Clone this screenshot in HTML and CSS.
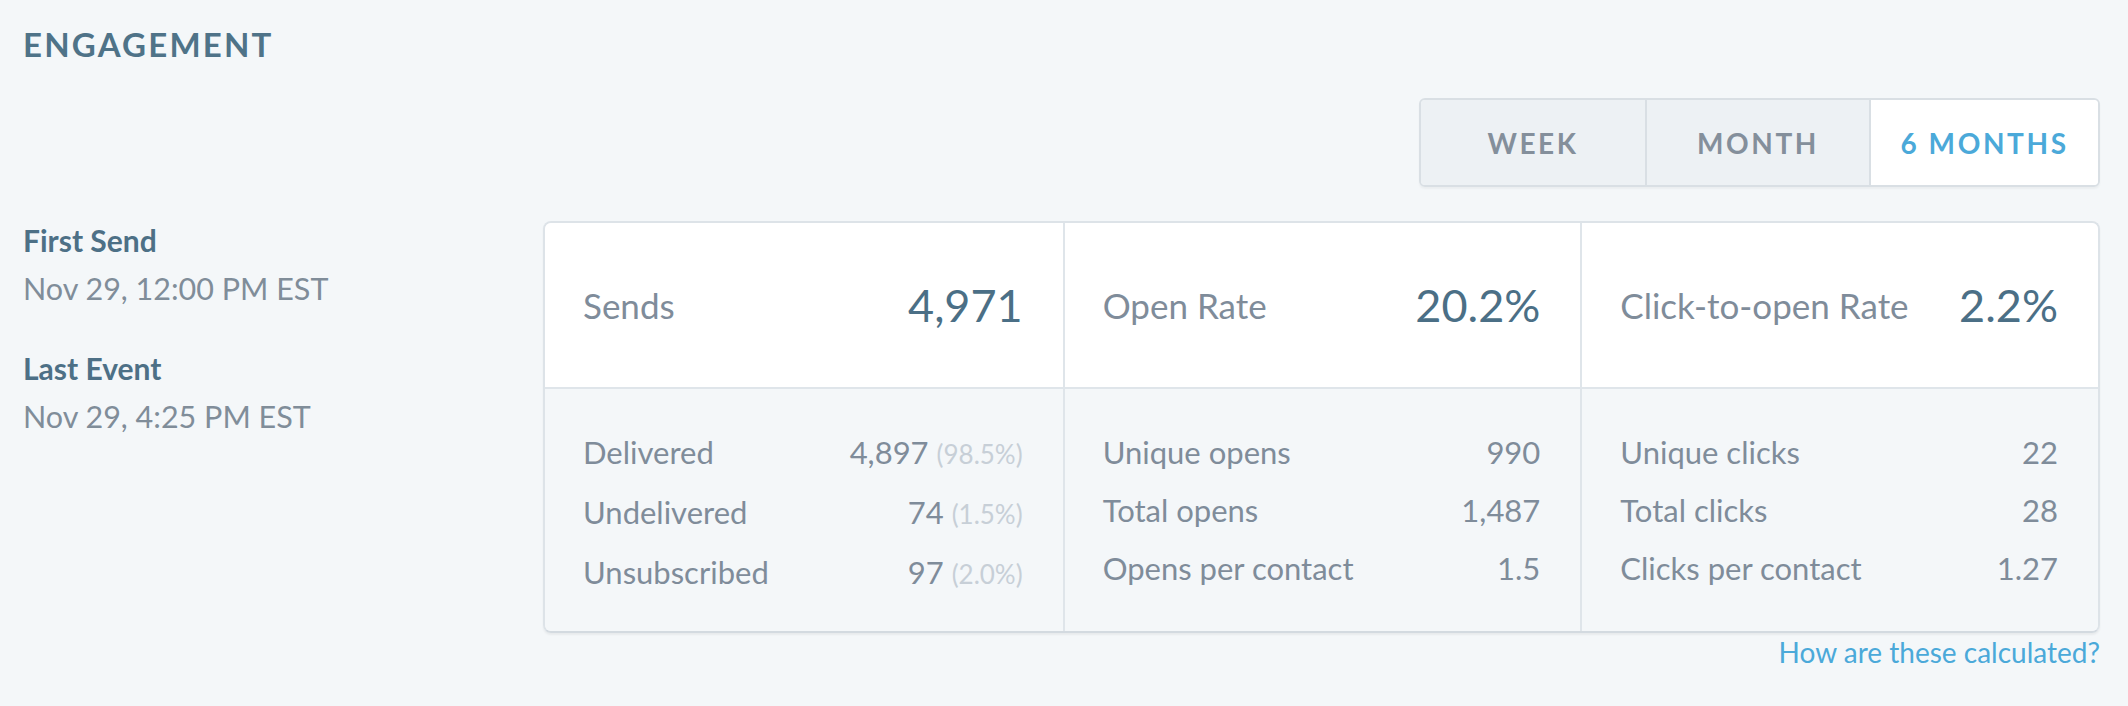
FILE: index.html
```html
<!DOCTYPE html>
<html lang="en">
<head>
<meta charset="utf-8">
<title>Engagement</title>
<link rel="stylesheet" href="styles.css">
</head>
<body>
<div class="page">
  <h1 class="title">ENGAGEMENT</h1>
  <div class="range-row">
    <div class="range">
      <button class="seg">WEEK</button>
      <button class="seg">MONTH</button>
      <button class="seg active">6 MONTHS</button>
    </div>
  </div>
  <div class="body">
    <aside class="meta">
      <div class="meta-item">
        <div class="meta-label">First Send</div>
        <div class="meta-value">Nov 29, 12:00 PM EST</div>
      </div>
      <div class="meta-item">
        <div class="meta-label">Last Event</div>
        <div class="meta-value">Nov 29, 4:25 PM EST</div>
      </div>
    </aside>
    <section class="stats">
      <div class="card">
        <div class="top">
          <div class="head"><span class="head-label">Sends</span><span class="head-num">4,971</span></div>
          <div class="head"><span class="head-label">Open Rate</span><span class="head-num">20.2%</span></div>
          <div class="head"><span class="head-label">Click-to-open Rate</span><span class="head-num">2.2%</span></div>
        </div>
        <div class="bottom">
          <div class="col">
            <div class="row"><span>Delivered</span><span>4,897 <span class="pct">(98.5%)</span></span></div>
            <div class="row"><span>Undelivered</span><span>74 <span class="pct">(1.5%)</span></span></div>
            <div class="row"><span>Unsubscribed</span><span>97 <span class="pct">(2.0%)</span></span></div>
          </div>
          <div class="col">
            <div class="row"><span>Unique opens</span><span>990</span></div>
            <div class="row"><span>Total opens</span><span>1,487</span></div>
            <div class="row"><span>Opens per contact</span><span>1.5</span></div>
          </div>
          <div class="col">
            <div class="row"><span>Unique clicks</span><span>22</span></div>
            <div class="row"><span>Total clicks</span><span>28</span></div>
            <div class="row"><span>Clicks per contact</span><span>1.27</span></div>
          </div>
        </div>
      </div>
      <div class="help-row"><a class="help" href="#">How are these calculated?</a></div>
    </section>
  </div>
</div>
</body>
</html>
```

FILE: styles.css
```css
html, body {
  margin: 0;
  padding: 0;
  background: #f4f7f9;
}
body {
  font-family: Lato, "Open Sans", sans-serif;
  color: #7f8c9a;
}
.page {
  padding: 24px 28px 0 23px;
}
.title {
  margin: 0;
  font-family: Lato, sans-serif;
  font-weight: 700;
  font-size: 33px;
  line-height: 40px;
  letter-spacing: 2.2px;
  color: #4f7388;
}
.range-row {
  display: flex;
  justify-content: flex-end;
  margin-top: 34px;
}
.range {
  display: grid;
  grid-template-columns: 224px 224px 229px;
  height: 89px;
  border: 2px solid #d9dfe4;
  border-radius: 6px;
  overflow: hidden;
  box-sizing: border-box;
  box-shadow: 0 2px 2px rgba(0, 0, 0, 0.04);
}
.seg {
  border: 0;
  border-left: 2px solid #d9dfe4;
  background: #edf1f4;
  font-family: Lato, sans-serif;
  font-weight: 700;
  font-size: 28px;
  letter-spacing: 2.6px;
  color: #848f9b;
  padding: 0;
  margin: 0;
}
.seg:first-child {
  border-left: 0;
}
.seg.active {
  background: #ffffff;
  color: #4ba9d9;
}
.body {
  display: flex;
  align-items: flex-start;
  margin-top: 29px;
}
.meta {
  width: 520px;
  flex: none;
}
.meta-item + .meta-item {
  margin-top: 32px;
}
.meta-label {
  font-size: 30px;
  line-height: 48px;
  font-weight: 700;
  color: #4d7086;
}
.meta-value {
  font-size: 30.5px;
  line-height: 48px;
  color: #808d99;
}
.stats {
  flex: 1;
  margin-top: 5px;
}
.card {
  border: 2px solid #dde3e8;
  border-bottom-color: #d3dae0;
  border-radius: 8px;
  overflow: hidden;
  box-shadow: 0 2px 2px rgba(0, 0, 0, 0.05);
}
.top {
  display: grid;
  grid-template-columns: 1fr 1fr 1fr;
  height: 164px;
  background: #ffffff;
  border-bottom: 2px solid #dfe5ea;
}
.head {
  display: flex;
  align-items: center;
  justify-content: space-between;
  padding: 0 40px 0 38px;
}
.head + .head,
.col + .col {
  border-left: 2px solid #dfe5ea;
}
.head-label {
  font-size: 35px;
  color: #7f8c9a;
}
.head-num {
  font-size: 45px;
  color: #4b6f86;
}
.bottom {
  display: grid;
  grid-template-columns: 1fr 1fr 1fr;
  background: #f4f7f9;
}
.col {
  padding: 34px 40px 28px 38px;
}
.row {
  display: flex;
  justify-content: space-between;
  font-size: 31px;
  line-height: 58px;
  color: #7f8c9a;
}
.pct {
  font-size: 26px;
  color: #c7cfd7;
}
.help-row {
  display: flex;
  justify-content: flex-end;
  margin-top: 2px;
}
.help {
  font-size: 28px;
  line-height: 34px;
  color: #4ba9d9;
  text-decoration: none;
}
```
